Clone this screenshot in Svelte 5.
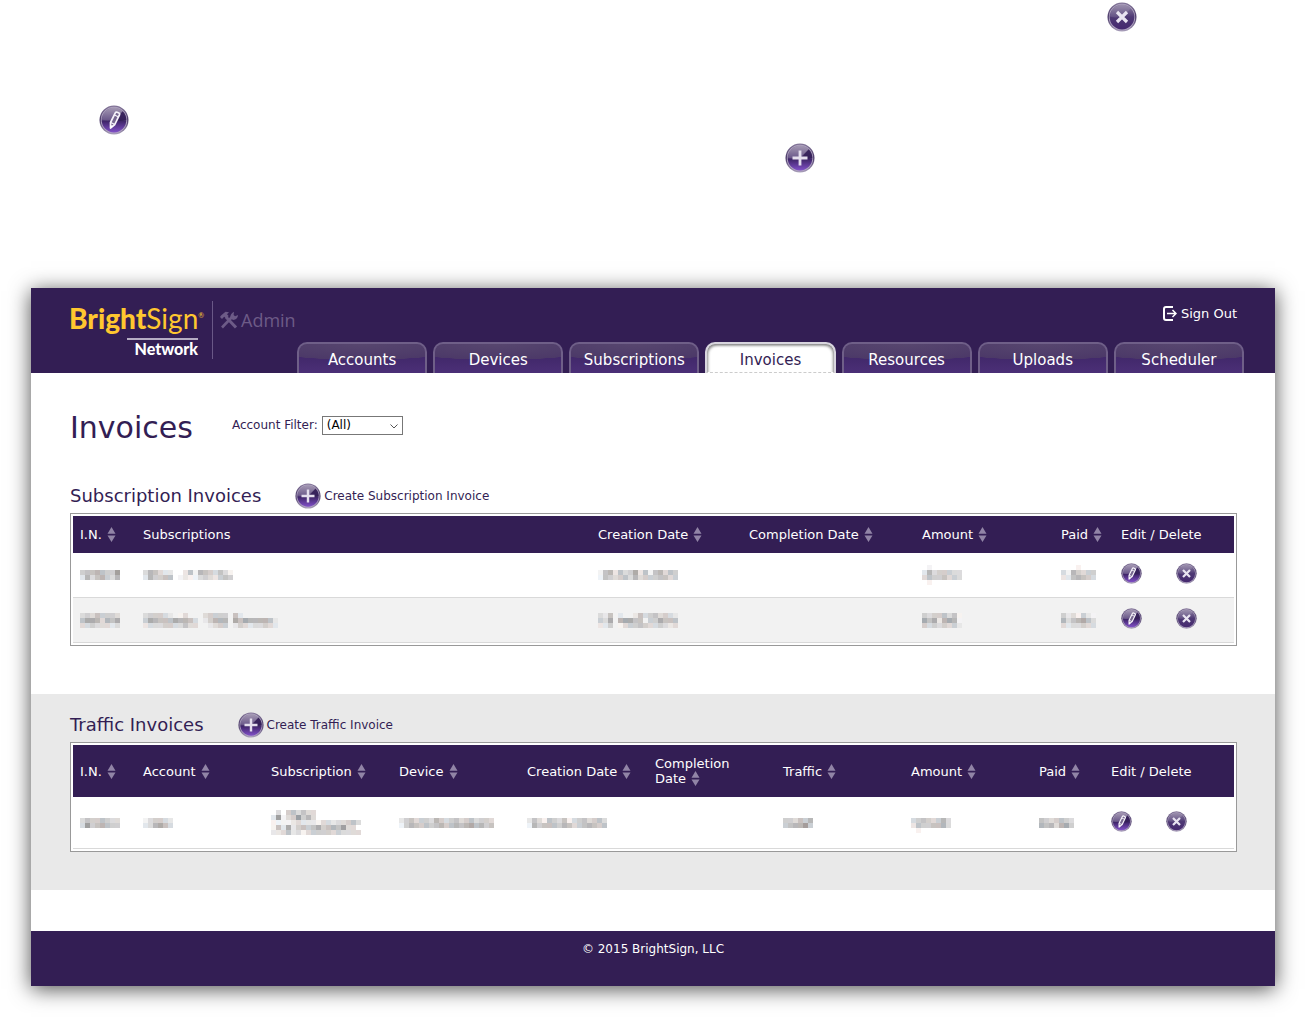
<script lang="ts">
  type IconKind = 'add' | 'edit' | 'delete';

  interface Column {
    label: string;
    size?: string;
    sortable?: boolean;
  }

  interface InvoiceTable {
    columns: Column[];
    rows: string[][][];
  }

  const tabs = [
    'Accounts',
    'Devices',
    'Subscriptions',
    'Invoices',
    'Resources',
    'Uploads',
    'Scheduler',
  ];

  let activeTab = $state('Invoices');
  let account = $state('all');

  // Cell values are masked: each digit is the darkness of one mosaic block.
  const subscriptionInvoices: InvoiceTable = {
    columns: [
      { label: 'I.N.', size: 'number', sortable: true },
      { label: 'Subscriptions' },
      { label: 'Creation Date', size: 'created', sortable: true },
      { label: 'Completion Date', size: 'completed', sortable: true },
      { label: 'Amount', size: 'amount', sortable: true },
      { label: 'Paid', size: 'paid', sortable: true },
    ],
    rows: [
      [
        ['45565448', '26356436'],
        ['365322..2516543531', '264455.12113432454'],
        ['1562534725156354', '1543453634445534'],
        [],
        ['.1......', '26344433', '35445343', '.1......'],
        ['...1...', '3164344', '2256543', '.......'],
      ],
      [
        ['34354443', '57763657', '33433323'],
        [
          '344432.13...34444.52.......',
          '47655576653.24666.757666652',
          '23334433533..2344.243233432',
        ],
        ['325.2..253453432', '437.67755.447555', '224.134454334323'],
        [],
        ['43445351', '75726761', '43434342'],
        ['4231421', '6356753', '3233433'],
      ],
    ],
  };

  const trafficInvoices: InvoiceTable = {
    columns: [
      { label: 'I.N.', size: 'number', sortable: true },
      { label: 'Account', sortable: true },
      { label: 'Subscription', sortable: true },
      { label: 'Device', sortable: true },
      { label: 'Creation Date', sortable: true },
      { label: 'Completion Date', sortable: true },
      { label: 'Traffic', sortable: true },
      { label: 'Amount', sortable: true },
      { label: 'Paid', size: 'traffic-paid', sortable: true },
    ],
    rows: [
      [
        ['35445433', '38456544'],
        ['134432', '236753'],
        [
          '.3.453533..........',
          '281348463..........',
          '111123222133233453.',
          '15272454574565833..',
          '223523134444343333.',
        ],
        ['2453443643453453443', '1465454564565675645'],
        ['2531543513453453', '1645554653456545'],
        [],
        ['443546', '456684'],
        ['........', '34543463', '25445563', '.1......'],
        ['5434543', '6563674'],
      ],
    ],
  };

  const tints = [
    [0, 0, 0],
    [4, 0, -3],
    [-5, 0, 5],
    [1, 0, 2],
    [6, -2, -4],
  ];

  function blocks(lines: string[]) {
    return lines.flatMap((line, y) =>
      [...line].flatMap((level, x) => {
        if (level === '.') return [];
        const shade = 255 - Number(level) * 12;
        const [r, g, b] = tints[(x * 3 + y * 2) % tints.length];
        return [{ x, y, fill: `rgb(${shade + r}, ${shade + g}, ${shade + b})` }];
      }),
    );
  }
</script>

{#snippet roundIcon(kind: IconKind)}
  <svg class="round-icon" viewBox="0 0 30 30" aria-hidden="true">
    <circle cx="15" cy="15" r="14.5" fill="url(#rim)" />
    <circle cx="15" cy="15" r="13.2" fill="#b3a8c3" />
    <circle cx="15" cy="15" r="12.4" fill={kind === 'delete' ? 'url(#dark)' : 'url(#glow)'} />
    {#if kind !== 'delete'}
      <path d="M15 15 23.7 6.3A12.3 12.3 0 0 1 27.3 15Q21 17 15 15Z" fill="#2f1a54" opacity="0.85" />
    {/if}
    <path d="M2.9 14.5A12.2 12.2 0 0 1 23.6 6.4L18 13Q11 17 2.9 14.5Z" fill="#fff" opacity="0.12" />
    {#if kind === 'add'}
      <path d="M15 7.5v15M7.5 15h15" stroke="#e4deed" stroke-width="2.8" fill="none" />
    {:else if kind === 'edit'}
      <path
        d="m11.5 17.5 4.8-9.6q.7-1.3 2-.6l1.5.7q1.3.6.6 2L15.8 19.5l-4.3 3.5Z"
        fill="#76678f"
        stroke="#f6f3fa"
        stroke-width="1.7"
        stroke-linejoin="round"
      />
      <path d="m15.5 10 4.2 2M11.7 17.5l4.2 2" stroke="#f6f3fa" stroke-width="1.3" />
      <path d="m11.5 20 .2 3.2 2.6-2Z" fill="#fff" />
    {:else}
      <path d="m10 10 10 10m0-10L10 20" stroke="#e9e4f1" stroke-width="3.2" fill="none" />
    {/if}
  </svg>
{/snippet}

{#snippet sortArrows()}
  <svg class="sort" viewBox="0 0 9 15" aria-hidden="true">
    <path d="M4.5 0 8.5 6.8h-8ZM4.5 15 .5 8.4h8Z" />
  </svg>
{/snippet}

{#snippet invoiceTable(data: InvoiceTable, label: string, actionSize: string)}
  <table aria-label={label}>
    <colgroup>
      {#each data.columns as column}
        <col class={column.size} />
      {/each}
      <col class={actionSize} />
    </colgroup>
    <thead>
      <tr>
        {#each data.columns as column}
          <th scope="col">
            {#if column.sortable}
              <button>{column.label} {@render sortArrows()}</button>
            {:else}
              {column.label}
            {/if}
          </th>
        {/each}
        <th scope="col">Edit / Delete</th>
      </tr>
    </thead>
    <tbody>
      {#each data.rows as row}
        <tr>
          {#each row as lines}
            <td>
              {#if lines.length}
                <svg
                  class="mosaic"
                  width={lines[0].length * 5}
                  height={lines.length * 5}
                  viewBox="0 0 {lines[0].length} {lines.length}"
                  aria-hidden="true"
                >
                  {#each blocks(lines) as block}
                    <rect x={block.x} y={block.y} width="1" height="1" fill={block.fill} />
                  {/each}
                </svg>
              {/if}
            </td>
          {/each}
          <td>
            <div class="actions">
              <button class="icon-btn" aria-label="Edit">{@render roundIcon('edit')}</button>
              <button class="icon-btn" aria-label="Delete">{@render roundIcon('delete')}</button>
            </div>
          </td>
        </tr>
      {/each}
    </tbody>
  </table>
{/snippet}

<svg class="defs" aria-hidden="true">
  <defs>
    <linearGradient id="rim" x1="0" y1="0" x2="0" y2="1">
      <stop offset="0" stop-color="#85779a" />
      <stop offset="0.5" stop-color="#4b3a69" />
      <stop offset="1" stop-color="#a99fba" />
    </linearGradient>
    <linearGradient id="glow" x1="0" y1="0" x2="0" y2="1">
      <stop offset="0" stop-color="#988ba9" />
      <stop offset="0.5" stop-color="#56417a" />
      <stop offset="0.55" stop-color="#3f2569" />
      <stop offset="1" stop-color="#8150c8" />
    </linearGradient>
    <linearGradient id="dark" x1="0" y1="0" x2="0" y2="1">
      <stop offset="0" stop-color="#8f82a3" />
      <stop offset="0.5" stop-color="#4e3974" />
      <stop offset="1" stop-color="#45286f" />
    </linearGradient>
  </defs>
</svg>

<div class="page">
  <span class="loose loose-delete">{@render roundIcon('delete')}</span>
  <span class="loose loose-edit">{@render roundIcon('edit')}</span>
  <span class="loose loose-add">{@render roundIcon('add')}</span>

  <div class="panel">
    <header>
      <div class="brand">
        <div class="logo">
          <div class="wordmark"><b>Bright</b>Sign<sup>®</sup></div>
          <div class="network">Network</div>
        </div>
        <div class="admin">
          <svg viewBox="0 0 18 18" aria-hidden="true">
            <path
              d="M0 6 1 4.5 5.5.8l3.5.4-2 2 1.700 1.900-2.600 2.400-1.900-1.700L2 8Z"
              fill="currentColor"
            />
            <path d="m6 6 10 10.500" stroke="currentColor" stroke-width="3" />
            <path d="M2 16.500 12.500 5.500" stroke="currentColor" stroke-width="2.600" />
            <path
              d="M10.500 7q-.8-4 3.500-6.200l-.4 3.200 1.500 1.200 2.900-1.200q-.2 4.500-5 5Z"
              fill="currentColor"
            />
          </svg>
          <span>Admin</span>
        </div>
      </div>
      <div class="side">
        <a class="sign-out" href="#sign-out">
          <svg viewBox="0 0 14 15" aria-hidden="true">
            <path d="M10 1H3Q1 1 1 3v9q0 2 2 2h7" />
            <path class="arrow" d="M4 7.500h9M9.500 4 13 7.500 9.500 11" />
          </svg>
          Sign Out
        </a>
        <nav>
          {#each tabs as tab}
            <a
              class="tab"
              class:active={tab === activeTab}
              href="#{tab.toLowerCase()}"
              onclick={() => (activeTab = tab)}>{tab}</a
            >
          {/each}
        </nav>
      </div>
    </header>

    <main>
      <section>
        <div class="title-row">
          <h1>Invoices</h1>
          <div class="filter">
            <label for="account-filter">Account Filter:</label>
            <div class="select">
              <select id="account-filter" bind:value={account}>
                <option value="all">(All)</option>
              </select>
              <svg viewBox="0 0 8 5" aria-hidden="true"><path d="m.5.5 3.5 3.500L7.500.5" /></svg>
            </div>
          </div>
        </div>
        <div class="section-head">
          <h2>Subscription Invoices</h2>
          <button class="create">{@render roundIcon('add')}Create Subscription Invoice</button>
        </div>
        {@render invoiceTable(subscriptionInvoices, 'Subscription Invoices', 'actions-col')}
      </section>

      <section class="shaded">
        <div class="section-head">
          <h2>Traffic Invoices</h2>
          <button class="create">{@render roundIcon('add')}Create Traffic Invoice</button>
        </div>
        {@render invoiceTable(trafficInvoices, 'Traffic Invoices', 'traffic-actions')}
      </section>
    </main>

    <footer>© 2015 BrightSign, LLC</footer>
  </div>
</div>

<style>
  :global(body) {
    margin: 0;
    background: #fff;
  }

  .page {
    --purple: #331e54;
    position: relative;
    padding: 288px 32px 31px 31px;
    font-family: Verdana, 'DejaVu Sans', sans-serif;
    font-size: 13px;
    line-height: 15px;
    color: var(--purple);
  }

  .defs {
    position: absolute;
    width: 0;
    height: 0;
  }

  button {
    padding: 0;
    border: 0;
    background: none;
    color: inherit;
    font: inherit;
    text-align: left;
    cursor: pointer;
  }

  .round-icon {
    display: block;
    width: 100%;
    height: 100%;
  }

  .loose {
    position: absolute;
    width: 30px;
    height: 30px;
  }

  .loose-delete {
    top: 2px;
    left: 1107px;
  }

  .loose-edit {
    top: 105px;
    left: 99px;
  }

  .loose-add {
    top: 143px;
    left: 785px;
  }

  .panel {
    background: #fff;
    box-shadow: 0 3px 20px rgba(0, 0, 0, 0.7);
  }

  header {
    display: flex;
    justify-content: space-between;
    height: 85px;
    padding: 0 31px 0 38px;
    background: var(--purple);
    color: #fff;
  }

  .brand {
    display: flex;
    align-items: flex-start;
    padding-top: 13px;
  }

  .logo {
    width: 144px;
    height: 58px;
    box-sizing: border-box;
    border-right: 1px solid #6a5887;
    font-family: Lato, sans-serif;
  }

  .wordmark {
    height: 37px;
    color: #ffc72f;
    font-size: 28px;
    line-height: 34px;
    white-space: nowrap;
  }

  .wordmark b {
    font-weight: 900;
  }

  .wordmark sup {
    font-size: 7px;
    line-height: 7px;
    vertical-align: 11px;
  }

  .network {
    width: 71px;
    margin-left: 58px;
    border-top: 2px solid #b6adc4;
    font-size: 16px;
    font-weight: 900;
    line-height: 18px;
    text-align: right;
  }

  .admin {
    display: flex;
    align-items: center;
    gap: 3px;
    padding: 7px 0 0 7px;
    color: #6d5b87;
    font-family: 'Open Sans', sans-serif;
    font-size: 18px;
    line-height: 24px;
  }

  .admin svg {
    width: 18px;
    height: 18px;
  }

  .side {
    display: flex;
    flex: 0 1 947px;
    flex-direction: column;
    align-items: flex-end;
    justify-content: space-between;
  }

  .sign-out {
    display: flex;
    align-items: center;
    gap: 4px;
    margin: 18px 7px 0 0;
    color: #fff;
    text-decoration: none;
  }

  .sign-out svg {
    width: 14px;
    height: 15px;
    fill: none;
    stroke: #fff;
    stroke-width: 2;
  }

  .sign-out .arrow {
    stroke-width: 1.5;
  }

  nav {
    display: flex;
    gap: 6px;
    width: 100%;
  }

  .tab {
    flex: 1 1 0;
    box-sizing: border-box;
    height: 31px;
    border: 2px solid #6f5f88;
    border-bottom: 0;
    border-radius: 10px 10px 0 0;
    background:
      radial-gradient(ellipse 90% 16px at 50% 0, #57466f 0, #4c3968 98%, transparent 100%),
      linear-gradient(#3a2360, #4b2f77);
    color: #fff;
    font-size: 15px;
    line-height: 32px;
    text-align: center;
    text-decoration: none;
  }

  .tab.active {
    border-color: #d8d5de;
    border-bottom: 1px dashed #ccc;
    background: #fff;
    box-shadow:
      inset 2px 2px 3px -1px #888,
      inset -2px 2px 3px -1px #888;
    color: var(--purple);
  }

  section {
    padding: 37px 38px 48px 39px;
  }

  .shaded {
    padding-top: 18px;
    padding-bottom: 38px;
    background: #e9e9e9;
  }

  .title-row {
    display: flex;
    align-items: center;
    gap: 39px;
    height: 36px;
    margin-bottom: 37px;
  }

  h1,
  h2 {
    margin: 0;
    font-weight: 400;
  }

  h1 {
    font-size: 30px;
    line-height: 36px;
  }

  h2 {
    font-size: 18px;
    line-height: 26px;
  }

  .filter {
    display: flex;
    align-items: center;
    gap: 4px;
    padding-bottom: 5px;
    font-size: 12px;
  }

  .select {
    position: relative;
  }

  select {
    display: block;
    width: 81px;
    height: 19px;
    padding: 0 4px;
    appearance: none;
    border: 1px solid #777;
    border-radius: 0;
    background: #fff;
    color: #000;
    font: inherit;
  }

  .select svg {
    position: absolute;
    top: 8px;
    right: 5px;
    width: 8px;
    height: 5px;
    fill: none;
    stroke: #555;
    pointer-events: none;
  }

  .section-head {
    display: flex;
    align-items: center;
    gap: 34px;
    height: 26px;
    margin-bottom: 4px;
  }

  .create {
    display: flex;
    align-items: center;
    gap: 3px;
    font-size: 12px;
  }

  .create .round-icon {
    width: 26px;
    height: 26px;
  }

  table {
    width: 100%;
    padding: 2px;
    border: 1px solid #999;
    border-spacing: 0;
    background: #fff;
    table-layout: fixed;
  }

  .number {
    width: 63px;
  }

  .created {
    width: 151px;
  }

  .completed {
    width: 173px;
  }

  .amount {
    width: 139px;
  }

  .paid {
    width: 60px;
  }

  .actions-col {
    width: 120px;
  }

  .traffic-paid {
    width: 72px;
  }

  .traffic-actions {
    width: 130px;
  }

  th,
  td {
    box-sizing: border-box;
    height: 45px;
    padding: 0 0 0 7px;
    text-align: left;
    vertical-align: middle;
  }

  th {
    height: 37px;
    background: var(--purple);
    color: #fff;
    font-weight: 400;
  }

  td {
    border-bottom: 1px solid #d9d9d9;
  }

  tbody tr:nth-child(even) td {
    background: #f2f2f2;
  }

  .shaded th,
  .shaded td {
    height: 52px;
    padding-right: 14px;
  }

  .shaded th:first-child,
  .shaded th:nth-last-child(2) {
    padding-right: 0;
  }

  .sort {
    width: 9px;
    height: 15px;
    margin: -2px 0 0 1px;
    fill: #9184a6;
    vertical-align: middle;
  }

  .mosaic {
    display: block;
    shape-rendering: crispEdges;
  }

  .actions {
    display: flex;
    gap: 34px;
    padding-bottom: 3px;
  }

  .icon-btn {
    width: 21px;
    height: 21px;
  }

  footer {
    box-sizing: border-box;
    height: 55px;
    margin-top: 41px;
    padding-top: 11px;
    background: var(--purple);
    color: #fff;
    font-size: 12px;
    text-align: center;
  }
</style>
